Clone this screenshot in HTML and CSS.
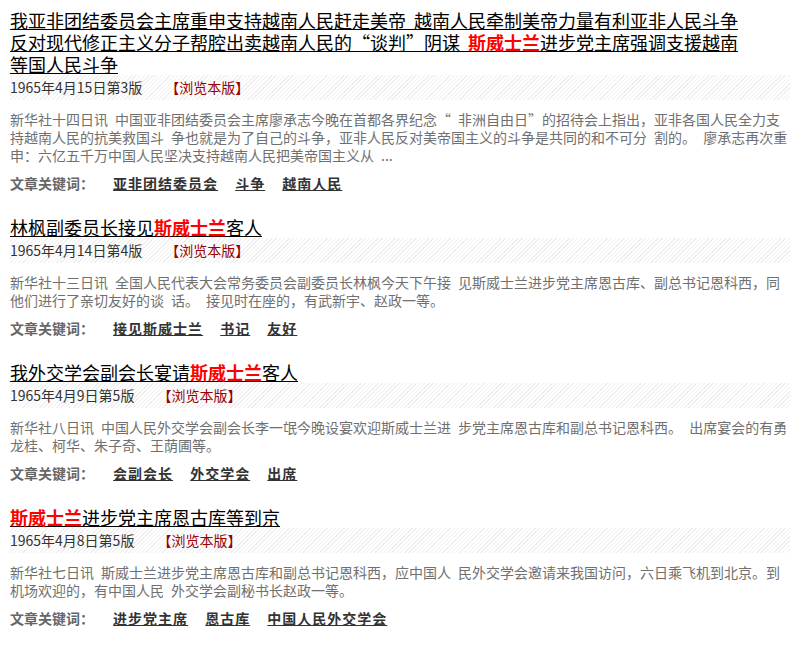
FILE: index.html
```html
<!DOCTYPE html>
<html lang="zh-CN">
<head>
    <meta charset="UTF-8">
    <title>文章检索结果</title>
    <link rel="stylesheet" href="styles.css">
</head>
<body>
    <div class="result-list">
        <div class="result-item">
            <h3 class="item-title"><a href="#">我亚非团结委员会主席重申支持越南人民赶走美帝  越南人民牵制美帝力量有利亚非人民斗争 反对现代修正主义分子帮腔出卖越南人民的“谈判”阴谋 <span class="hit">斯威士兰</span>进步党主席强调支援越南等国人民斗争</a></h3>
            <div class="item-meta">
                <span class="item-date">1965年4月15日第3版</span>
                <a class="item-view" href="#">【浏览本版】</a>
            </div>
            <p class="item-summary">新华社十四日讯 中国亚非团结委员会主席廖承志今晚在首都各界纪念“ 非洲自由日”的招待会上指出，亚非各国人民全力支持越南人民的抗美救国斗 争也就是为了自己的斗争，亚非人民反对美帝国主义的斗争是共同的和不可分 割的。 廖承志再次重申：六亿五千万中国人民坚决支持越南人民把美帝国主义从 ...</p>
            <div class="item-tags">
                <span class="tags-label">文章关键词：</span>
                <a href="#">亚非团结委员会</a>
                <a href="#">斗争</a>
                <a href="#">越南人民</a>
            </div>
        </div>

        <div class="result-item">
            <h3 class="item-title"><a href="#">林枫副委员长接见<span class="hit">斯威士兰</span>客人</a></h3>
            <div class="item-meta">
                <span class="item-date">1965年4月14日第4版</span>
                <a class="item-view" href="#">【浏览本版】</a>
            </div>
            <p class="item-summary">新华社十三日讯 全国人民代表大会常务委员会副委员长林枫今天下午接 见斯威士兰进步党主席恩古库、副总书记恩科西，同他们进行了亲切友好的谈 话。 接见时在座的，有武新宇、赵政一等。</p>
            <div class="item-tags">
                <span class="tags-label">文章关键词：</span>
                <a href="#">接见斯威士兰</a>
                <a href="#">书记</a>
                <a href="#">友好</a>
            </div>
        </div>

        <div class="result-item">
            <h3 class="item-title"><a href="#">我外交学会副会长宴请<span class="hit">斯威士兰</span>客人</a></h3>
            <div class="item-meta">
                <span class="item-date">1965年4月9日第5版</span>
                <a class="item-view" href="#">【浏览本版】</a>
            </div>
            <p class="item-summary">新华社八日讯 中国人民外交学会副会长李一氓今晚设宴欢迎斯威士兰进 步党主席恩古库和副总书记恩科西。 出席宴会的有勇龙桂、柯华、朱子奇、王荫圃等。</p>
            <div class="item-tags">
                <span class="tags-label">文章关键词：</span>
                <a href="#">会副会长</a>
                <a href="#">外交学会</a>
                <a href="#">出席</a>
            </div>
        </div>

        <div class="result-item">
            <h3 class="item-title"><a href="#"><span class="hit">斯威士兰</span>进步党主席恩古库等到京</a></h3>
            <div class="item-meta">
                <span class="item-date">1965年4月8日第5版</span>
                <a class="item-view" href="#">【浏览本版】</a>
            </div>
            <p class="item-summary">新华社七日讯 斯威士兰进步党主席恩古库和副总书记恩科西，应中国人 民外交学会邀请来我国访问，六日乘飞机到北京。到机场欢迎的，有中国人民 外交学会副秘书长赵政一等。</p>
            <div class="item-tags">
                <span class="tags-label">文章关键词：</span>
                <a href="#">进步党主席</a>
                <a href="#">恩古库</a>
                <a href="#">中国人民外交学会</a>
            </div>
        </div>
    </div>
</body>
</html>
```

FILE: styles.css
```css
body {
    margin: 0;
    padding: 9px 10px;
    background-color: #fff;
    font-family: "Noto Sans CJK SC", "Liberation Sans", sans-serif;
    font-size: 14px;
    color: #333;
    word-spacing: 0.28em;
}

.result-list {
    width: 780px;
}

.result-item {
    margin-bottom: 23px;
}

.item-title {
    width: 740px;
    margin: 0;
    font-size: 18px;
    font-weight: normal;
    line-height: 22px;
}

.item-title a {
    color: #000;
    text-decoration: underline;
}

.item-title .hit {
    color: #f00;
    font-weight: bold;
}

.item-meta {
    height: 25px;
    line-height: 25px;
    background: repeating-linear-gradient(135deg, #fff 0, #fff 2px, #efefef 2px, #efefef 3px);
    white-space: nowrap;
}

.item-date {
    color: #333;
}

.item-view {
    margin-left: 16px;
    color: #990000;
    text-decoration: none;
}

.item-summary {
    margin: 10px 0 9px;
    line-height: 18px;
    color: #707070;
}

.item-tags {
    line-height: 20px;
    font-weight: bold;
}

.tags-label {
    color: #666;
    margin-right: 12px;
}

.item-tags a {
    color: #333;
    text-decoration: underline;
    letter-spacing: 1px;
    margin-right: 10px;
}
```
